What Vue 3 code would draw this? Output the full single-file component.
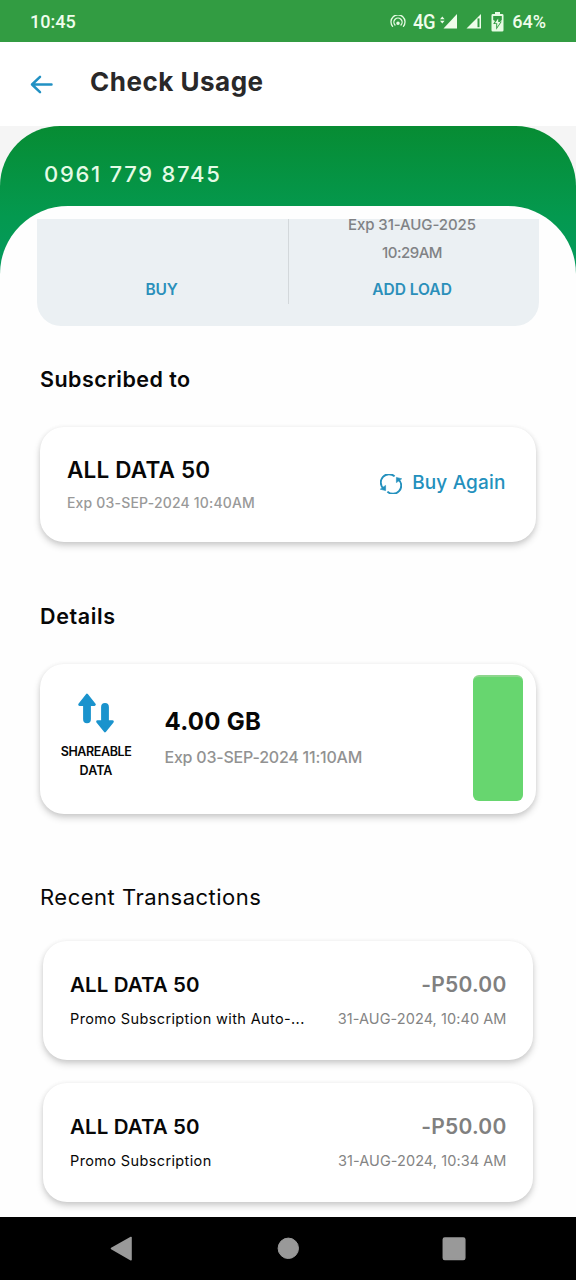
<script setup>
const transactions = [
  { name: 'ALL DATA 50', note: 'Promo Subscription with Auto-...', amount: '-P50.00', date: '31-AUG-2024, 10:40 AM' },
  { name: 'ALL DATA 50', note: 'Promo Subscription', amount: '-P50.00', date: '31-AUG-2024, 10:34 AM' },
]
</script>

<template>
  <div class="screen">
    <div class="status">
      <span class="clock">10:45</span>
      <div class="status-right">
        <svg class="hotspot" width="16" height="14" viewBox="0 0 16 14" fill="none" stroke="#e6fbe3" stroke-width="1.3" stroke-linecap="round">
          <path d="M2.6 11.3A7 7 0 1 1 13.4 11.3" />
          <path d="M5 10A4.1 4.1 0 1 1 11 10" />
          <circle cx="8" cy="8.2" r="1.1" fill="#e6fbe3" />
        </svg>
        <span class="net">4G</span>
        <svg class="sig" width="18" height="15" viewBox="0 0 18 15" fill="#effdeb">
          <path d="M17 0V14.5H3.5Z" />
          <path d="M0 5.2L2.3 2.4L4.6 5.2ZM0 6.8L2.3 9.6L4.6 6.8Z" />
        </svg>
        <svg class="sig2" width="16" height="15" viewBox="0 0 16 15">
          <path d="M15 0V14.5H0.5Z" fill="#effdeb" />
          <path d="M12.5 4.4V13.2" stroke="#329c42" stroke-width="2" />
        </svg>
        <svg class="batt" width="13" height="20" viewBox="0 0 13 20">
          <path d="M4 0H9V2H11.2Q12.5 2 12.5 3.3V18.2Q12.5 19.5 11.2 19.5H1.8Q.5 19.5 .5 18.2V3.3Q.5 2 1.8 2H4Z" fill="#e6fbe3" />
          <path d="M2.2 4H10.8V8L9 10L10.8 9.4L5.2 17.8V12H2.2L4 9L2.2 8Z" fill="#329c42" />
          <path d="M7.2 6.4L3.8 11.2H6.2V15L9.4 9.9H7.2Z" fill="#e6fbe3" />
        </svg>
        <span class="pct">64%</span>
      </div>
    </div>

    <header class="header">
      <svg class="back" width="24" height="20" viewBox="0 0 24 20" fill="none" stroke="#2291c3" stroke-width="2.5" stroke-linecap="round" stroke-linejoin="round">
        <path d="M21.5 9.5H2M10 1.8L2 9.5L10 17.2" />
      </svg>
      <h1>Check Usage</h1>
    </header>

    <section class="hero">
      <div class="green">
        <div class="phone">0961 779 8745</div>
        <div class="sheet">
          <div class="panel">
            <div class="half left"><span class="link buy">BUY</span></div>
            <div class="rule"></div>
            <div class="half">
              <span class="exp e1">Exp 31-AUG-2025</span>
              <span class="exp e2">10:29AM</span>
              <span class="link add">ADD LOAD</span>
            </div>
          </div>
        </div>
      </div>
    </section>

    <main class="content">
      <h2 class="subscribed">Subscribed to</h2>
      <div class="card sub-card">
        <div class="sub-text">
          <div class="plan">ALL DATA 50</div>
          <div class="plan-exp">Exp 03-SEP-2024 10:40AM</div>
        </div>
        <div class="again">
          <svg width="22" height="20" viewBox="0 0 22 20" fill="none" stroke="#2390bd" stroke-width="1.9">
            <path d="M3.4 14.4A8.2 8.2 0 0 1 14.6 2.4" />
            <path d="M18.6 5.6A8.2 8.2 0 0 1 7.4 17.6" />
            <path d="M0.3 15.2L5.6 16.6V11.4Z" fill="#2390bd" stroke="#2390bd" stroke-width=".6" />
            <path d="M21.7 4.8L16.4 3.4V8.6Z" fill="#2390bd" stroke="#2390bd" stroke-width=".6" />
          </svg>
          <span>Buy Again</span>
        </div>
      </div>

      <h2 class="details">Details</h2>
      <div class="card data-card">
        <div class="kind">
          <svg width="38" height="40" viewBox="0 0 38 40" fill="#1a93cd" stroke="#1a93cd" stroke-width="2.6" stroke-linejoin="round">
            <path d="M10 2L17.5 11.6H2.5Z" />
            <path d="M28 38L35.5 28.6H20.5Z" />
            <path d="M10 10V26.3M28 14V30" stroke-width="7.8" stroke-linecap="round" />
          </svg>
          <span class="share">SHAREABLE</span>
          <span class="data">DATA</span>
        </div>
        <div class="quota">
          <div class="amount">4.00 GB</div>
          <div class="quota-exp">Exp 03-SEP-2024 11:10AM</div>
        </div>
        <div class="meter"></div>
      </div>

      <h2 class="recent">Recent Transactions</h2>
      <div class="list">
        <div v-for="t in transactions" :key="t.date" class="card tx">
          <div class="row">
            <span class="tx-name">{{ t.name }}</span>
            <span class="tx-amount">{{ t.amount }}</span>
          </div>
          <div class="row small">
            <span class="tx-note">{{ t.note }}</span>
            <span class="tx-date">{{ t.date }}</span>
          </div>
        </div>
      </div>
    </main>

    <nav class="nav">
      <svg width="576" height="63" viewBox="0 0 576 63" fill="#999" stroke="#999" stroke-linejoin="round">
        <path d="M111.5 31.5L131 20.5V42.8Z" stroke-width="1.6" />
        <circle cx="288.3" cy="31.3" r="10.2" stroke-width="1" />
        <rect x="443.3" y="21" width="21.5" height="21.5" rx="1.5" stroke-width="1.5" />
      </svg>
    </nav>
  </div>
</template>

<style>
body { margin: 0; background: #fefefe; }
</style>

<style scoped>
* { box-sizing: border-box; }
.screen {
  width: 576px; height: 1280px; overflow: hidden;
  display: flex; flex-direction: column;
  background: #fefefe; color: #070707;
  font-family: Inter, "Open Sans", sans-serif;
  white-space: nowrap;
}
h1, h2 { margin: 0; }
.status {
  height: 42px; flex: none; background: #329c42; color: #effdeb;
  display: flex; justify-content: space-between; align-items: center;
  padding: 1px 30px 0 30px;
  font: 500 18px/42px Roboto, sans-serif;
}
.status-right { display: flex; align-items: center; }
.net { font-size: 20px; width: 22px; margin-left: 7px; letter-spacing: -0.5px; transform: scaleX(.92); transform-origin: left; }
.sig { margin-left: 5px; }
.sig2 { margin-left: 8px; }
.batt { margin: 0 8px 0 9px; }
.header { height: 84px; flex: none; display: flex; background: #fff; }
.back { margin: 33px 0 0 30px; }
h1 { margin: 19.5px 0 0 36px; font-size: 26px; line-height: 40px; font-weight: 700; color: #292829; letter-spacing: 0.5px; }
.hero { height: 200px; flex: none; background: linear-gradient(#f5f5f5 80px, #fefefe 80px); }
.green {
  height: 149px; border-radius: 60px 60px 0 0;
  background: linear-gradient(#078c33, #04994f 60%, #049b5f);
}
.phone { height: 80px; padding: 28px 0 0 44px; font-size: 22px; line-height: 40px; font-weight: 500; letter-spacing: 1.72px; color: #e4fbe6; }
.sheet { height: 120px; background: #fefefe; border-radius: 68px 68px 0 0; padding: 13px 37px 0; }
.panel { height: 107px; background: #ebf0f3; border-radius: 0 0 24px 24px; display: flex; }
.half { width: 246px; display: flex; flex-direction: column; align-items: center; }
.left { width: 251px; }
.rule { width: 1px; height: 85px; background: #d3d8db; }
.exp { font-size: 15px; line-height: 28px; font-weight: 500; color: #808285; letter-spacing: -0.1px; }
.e1 { line-height: 20px; margin: -4.5px 0 4px; }
.e2 { letter-spacing: -0.5px; }
.link { font-size: 15.5px; line-height: 28px; font-weight: 600; color: #2a8fba; }
.buy { margin: 56.5px 2px 0 0; letter-spacing: -0.3px; }
.add { margin-top: 9px; }
.content { flex: 1; padding: 0 40px; display: flex; flex-direction: column; }
h2 { font-size: 21.5px; line-height: 28px; font-weight: 600; height: 30px; letter-spacing: 0.45px; }
.subscribed { margin-top: 39px; }
.card {
  background: #fff; border-radius: 24px;
  box-shadow: 0 4px 7px rgba(0, 0, 0, .17), 0 1px 5px rgba(0, 0, 0, .08);
}
.sub-card { height: 115px; margin-top: 32px; padding: 0 30.5px 0 27px; display: flex; justify-content: space-between; }
.plan { margin-top: 28px; font-size: 22.5px; line-height: 30px; font-weight: 600; letter-spacing: 0.2px; }
.plan-exp { margin-top: 8px; font-size: 14px; line-height: 20px; font-weight: 500; color: #999; letter-spacing: 0.18px; }
.again { display: flex; align-items: center; height: 30px; margin-top: 40px; font-size: 19px; font-weight: 500; color: #2390bd; letter-spacing: 0.15px; }
.again svg { margin: 3px 10px 0 0; }
.details { margin-top: 60px; letter-spacing: 0.6px; }
.data-card { height: 150px; margin-top: 32px; display: flex; padding-right: 13.5px; }
.kind { width: 112px; display: flex; flex-direction: column; align-items: center; font-size: 12.5px; line-height: 18.5px; font-weight: 600; padding-top: 29px; }
.share { margin-top: 10px; letter-spacing: -0.4px; }
.quota { margin-left: 12.5px; flex: 1; }
.amount { margin-top: 42.5px; font-size: 24px; line-height: 30px; font-weight: 700; letter-spacing: 0.3px; }
.quota-exp { margin-top: 10.5px; font-size: 16px; line-height: 20px; font-weight: 500; color: #929292; letter-spacing: -0.22px; }
.meter { width: 50px; height: 126px; margin-top: 11px; border-radius: 6px; background: #67d66f; border-top: 2px solid #8ed68e; }
.recent { margin-top: 69px; font-size: 22px; font-weight: 400; letter-spacing: 0.5px; }
.list { display: flex; flex-direction: column; gap: 23px; margin: 28px 3px 0; }
.tx { height: 119px; padding: 29px 26.5px 0 27px; }
.row { display: flex; justify-content: space-between; font-size: 20.5px; line-height: 30px; font-weight: 600; letter-spacing: 0.1px; }
.tx-amount { color: #808080; font-size: 21px; letter-spacing: 0.25px; }
.small { margin-top: 9px; font-size: 14.5px; line-height: 20px; font-weight: 400; }
.tx-note { letter-spacing: 0.37px; }
.tx-date { color: #848484; letter-spacing: 0.07px; }
.nav { height: 63px; flex: none; background: #000; }
.nav svg { display: block; }
</style>
